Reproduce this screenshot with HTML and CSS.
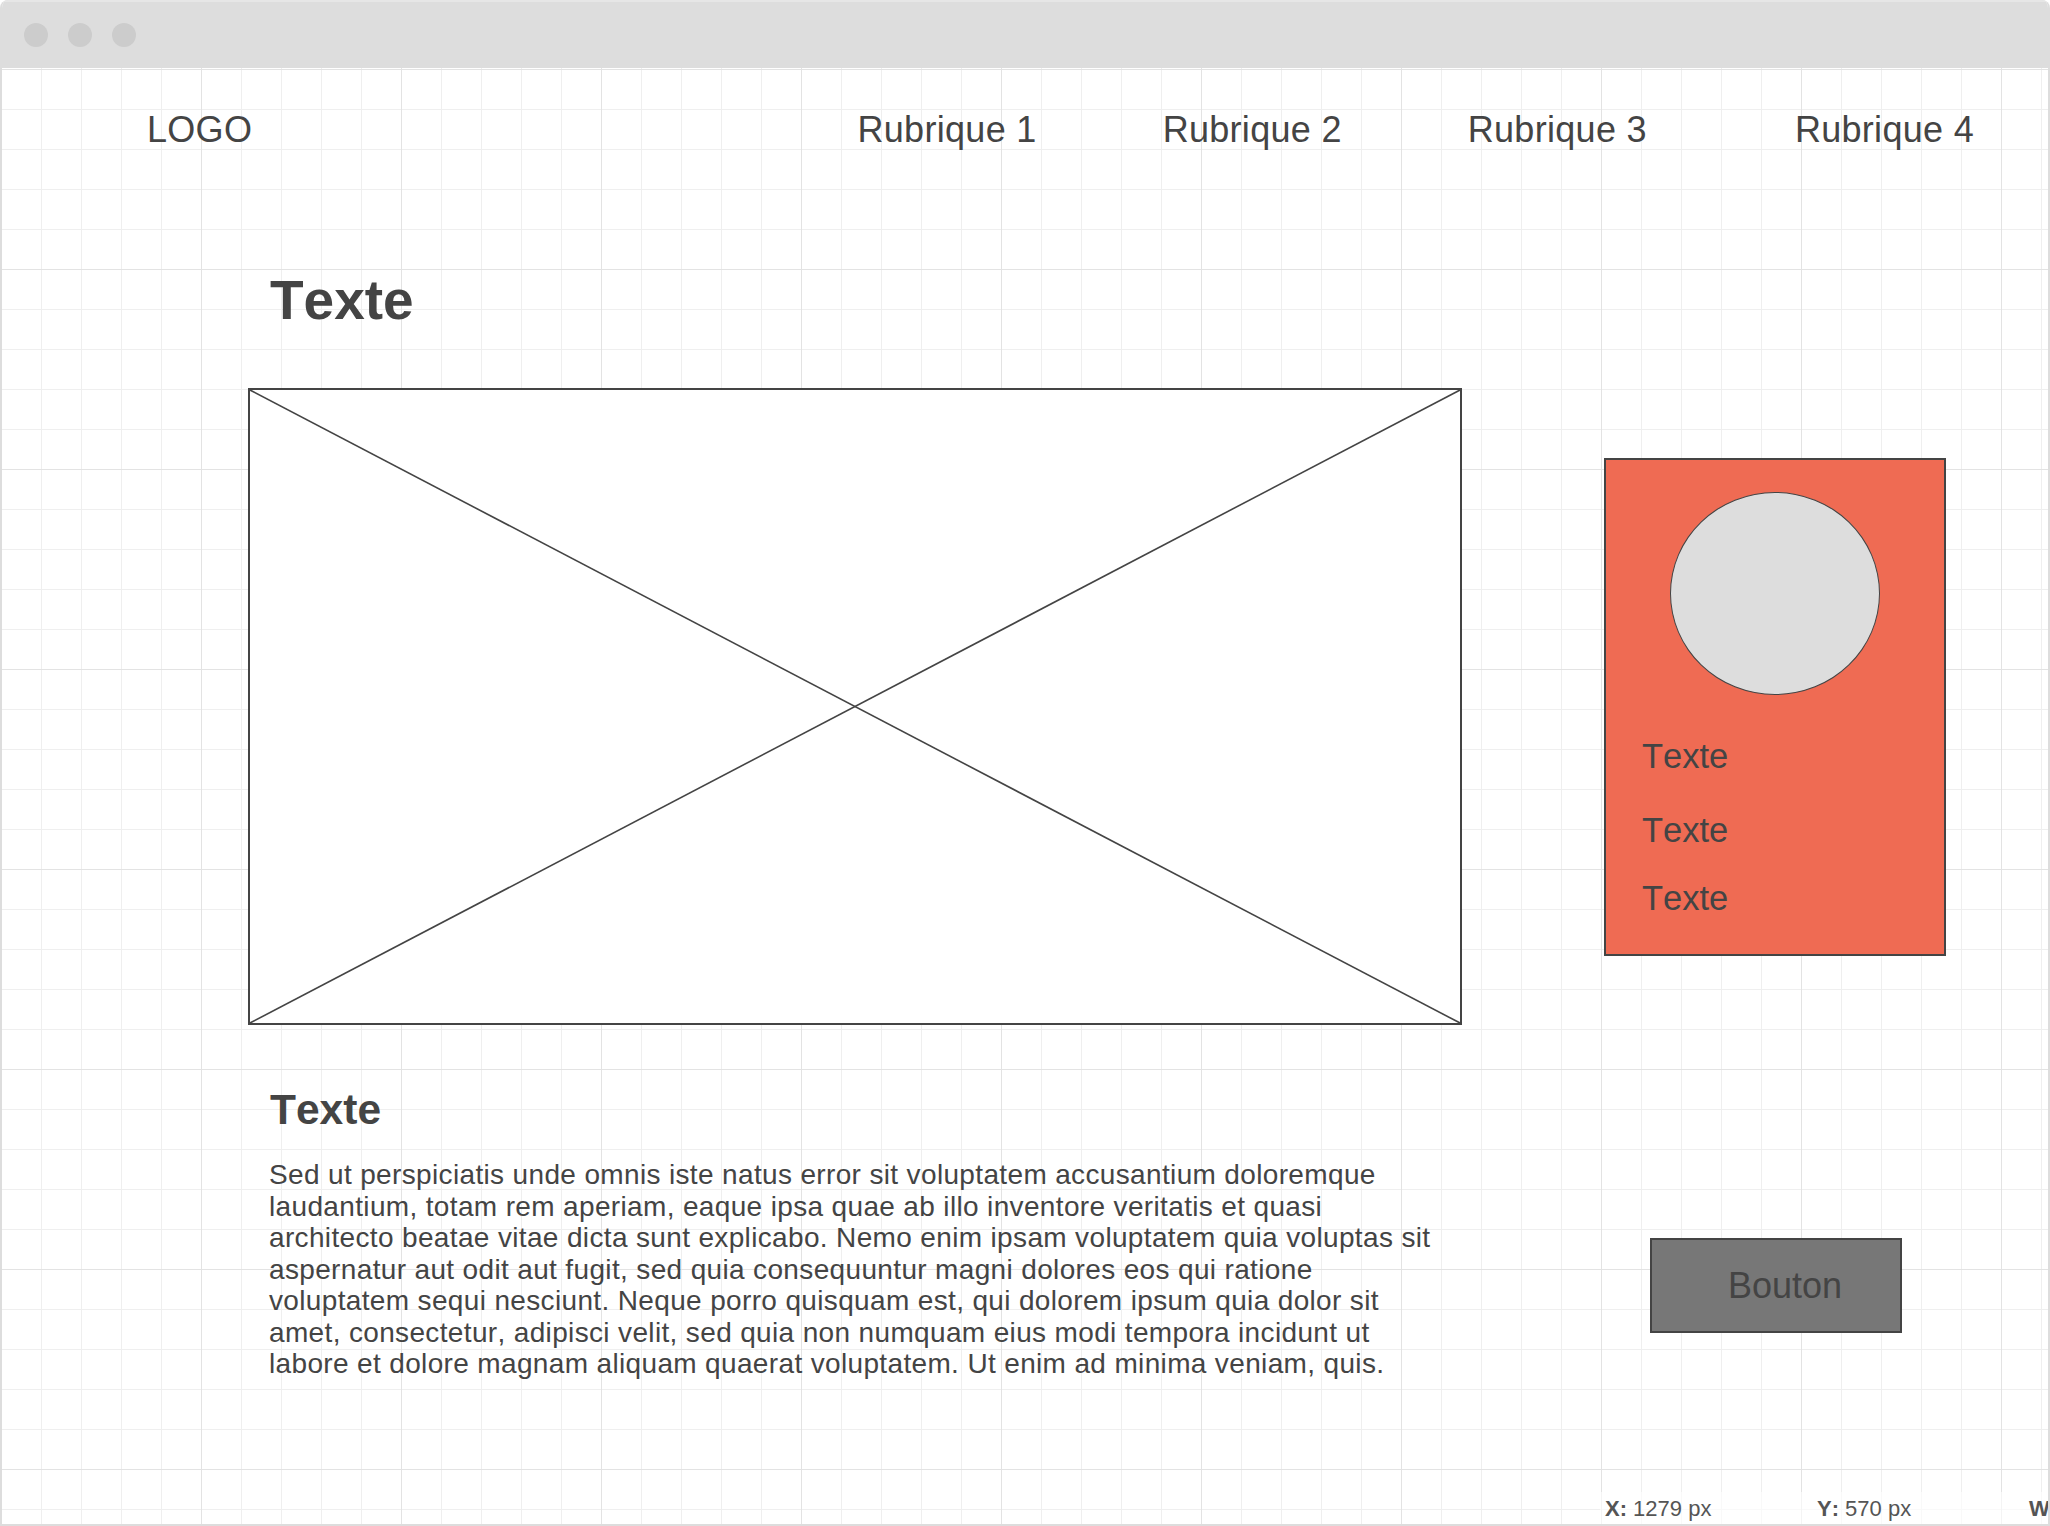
FILE: index.html
```html
<!DOCTYPE html>
<html lang="fr">
<head>
<meta charset="utf-8">
<title>Wireframe</title>
<link rel="stylesheet" href="styles.css">
</head>
<body>
<div class="window">
  <div class="titlebar">
    <span class="dot"></span><span class="dot"></span><span class="dot"></span>
  </div>
  <div class="canvas">
    <header class="header">
      <div class="logo">LOGO</div>
      <nav class="nav">
        <a class="nav-item">Rubrique 1</a>
        <a class="nav-item">Rubrique 2</a>
        <a class="nav-item">Rubrique 3</a>
        <a class="nav-item nav-item-last">Rubrique 4</a>
      </nav>
    </header>
    <main class="main">
      <section class="left">
        <h1 class="title">Texte</h1>
        <div class="placeholder">
          <svg class="cross" viewBox="0 0 100 100" preserveAspectRatio="none">
            <line x1="0" y1="0" x2="100" y2="100" vector-effect="non-scaling-stroke"/>
            <line x1="100" y1="0" x2="0" y2="100" vector-effect="non-scaling-stroke"/>
          </svg>
        </div>
        <h2 class="subtitle">Texte</h2>
        <p class="body-text">Sed ut perspiciatis unde omnis iste natus error sit voluptatem accusantium doloremque laudantium, totam rem aperiam, eaque ipsa quae ab illo inventore veritatis et quasi architecto beatae vitae dicta sunt explicabo. Nemo enim ipsam voluptatem quia voluptas sit aspernatur aut odit aut fugit, sed quia consequuntur magni dolores eos qui ratione voluptatem sequi nesciunt. Neque porro quisquam est, qui dolorem ipsum quia dolor sit amet, consectetur, adipisci velit, sed quia non numquam eius modi tempora incidunt ut labore et dolore magnam aliquam quaerat voluptatem. Ut enim ad minima veniam, quis.</p>
      </section>
      <aside class="right">
        <div class="card">
          <div class="avatar"></div>
          <div class="card-line">Texte</div>
          <div class="card-line">Texte</div>
          <div class="card-line">Texte</div>
        </div>
        <div class="button">Bouton</div>
      </aside>
    </main>
  </div>
  <div class="statusbar">
    <span class="stat"><b>X:</b> 1279 px</span>
    <span class="stat"><b>Y:</b> 570 px</span>
    <span class="stat"><b>W:</b> 342 px</span>
  </div>
</div>
</body>
</html>
```
FILE: styles.css
```css
html, body {
  margin: 0;
  padding: 0;
  width: 2050px;
  height: 1526px;
  overflow: hidden;
  background: #ffffff;
}

body {
  font-family: "Liberation Sans", Arial, sans-serif;
  font-kerning: none;
  color: #444444;
}

.window {
  position: relative;
  box-sizing: border-box;
  width: 2050px;
  height: 1526px;
  border: 2px solid #dddddd;
  border-top: none;
  border-radius: 8px 8px 0 0;
  overflow: hidden;
  display: flex;
  flex-direction: column;
}

.titlebar {
  flex: 0 0 68px;
  height: 68px;
  background: #dddddd;
  border-top: 2px solid #e6e6e6;
  box-sizing: border-box;
  display: flex;
  align-items: center;
  gap: 20px;
  padding-left: 22px;
}

.dot {
  width: 24px;
  height: 24px;
  border-radius: 50%;
  background: #cccccc;
}

.canvas {
  flex: 1 1 auto;
  background-color: #ffffff;
  background-image:
    linear-gradient(to right, #e3e3e3 1px, transparent 1px),
    linear-gradient(to bottom, #e3e3e3 1px, transparent 1px),
    linear-gradient(to right, #efefef 1px, transparent 1px),
    linear-gradient(to bottom, #efefef 1px, transparent 1px);
  background-size: 200px 200px, 200px 200px, 40px 40px, 40px 40px;
  background-position: 199px 0, 0 1px, 39px 0, 0 1px;
}

.header {
  display: flex;
  align-items: flex-start;
  padding: 44px 74px 0 145px;
  height: 36px;
  font-size: 36px;
  line-height: 36px;
  letter-spacing: 0.3px;
}

.logo {
  white-space: nowrap;
}

.nav {
  margin-left: auto;
  display: flex;
  gap: 126px;
}

.nav-item {
  white-space: nowrap;
  color: #444444;
  text-decoration: none;
}

.nav-item-last {
  margin-left: 22px;
}

.main {
  display: flex;
  align-items: flex-start;
}

.left {
  margin-left: 246px;
  width: 1214px;
}

.title {
  margin: 125px 0 0 0;
  padding-left: 22px;
  font-size: 55px;
  line-height: 54px;
  font-weight: bold;
}

.placeholder {
  margin-top: 61px;
  box-sizing: border-box;
  width: 1214px;
  height: 637px;
  border: 2px solid #444444;
  background: #ffffff;
}

.cross {
  display: block;
  width: 100%;
  height: 100%;
}

.cross line {
  stroke: #444444;
  stroke-width: 1.6;
}

.subtitle {
  margin: 64px 0 0 0;
  padding-left: 22px;
  font-size: 42.5px;
  line-height: 42px;
  font-weight: bold;
}

.body-text {
  margin: 28px 0 0 0;
  padding-left: 21px;
  width: 1180px;
  font-size: 28px;
  letter-spacing: 0.35px;
  line-height: 31.5px;
}

.right {
  margin-left: 142px;
  width: 342px;
  display: flex;
  flex-direction: column;
}

.card {
  margin-top: 310px;
  box-sizing: border-box;
  width: 342px;
  height: 498px;
  border: 2px solid #444444;
  background: #ef6b53;
  padding: 32px 0 0 36px;
  display: flex;
  flex-direction: column;
}

.avatar {
  align-self: center;
  margin-left: -36px;
  box-sizing: border-box;
  width: 210px;
  height: 203px;
  border: 1.5px solid #444444;
  border-radius: 50%;
  background: #dddddd;
}

.card-line {
  font-size: 34.5px;
  line-height: 34px;
}

.card-line:nth-child(2) { margin-top: 44px; }
.card-line:nth-child(3) { margin-top: 40px; }
.card-line:nth-child(4) { margin-top: 34px; }

.button {
  margin-top: 282px;
  margin-left: 46px;
  box-sizing: border-box;
  width: 252px;
  height: 95px;
  border: 2px solid #444444;
  background: #777777;
  padding-left: 76px;
  font-size: 36px;
  line-height: 91px;
  color: #444444;
}

.statusbar {
  position: absolute;
  left: 1598px;
  bottom: -2px;
  width: 460px;
  height: 34px;
  background: rgba(255, 255, 255, 0.6);
  display: flex;
  align-items: center;
  padding-left: 5px;
  font-family: "Liberation Sans", Arial, sans-serif;
  font-size: 22px;
  color: #555555;
  white-space: nowrap;
}

.stat {
  width: 212px;
  flex: 0 0 212px;
}

.stat b {
  font-weight: bold;
}
```
